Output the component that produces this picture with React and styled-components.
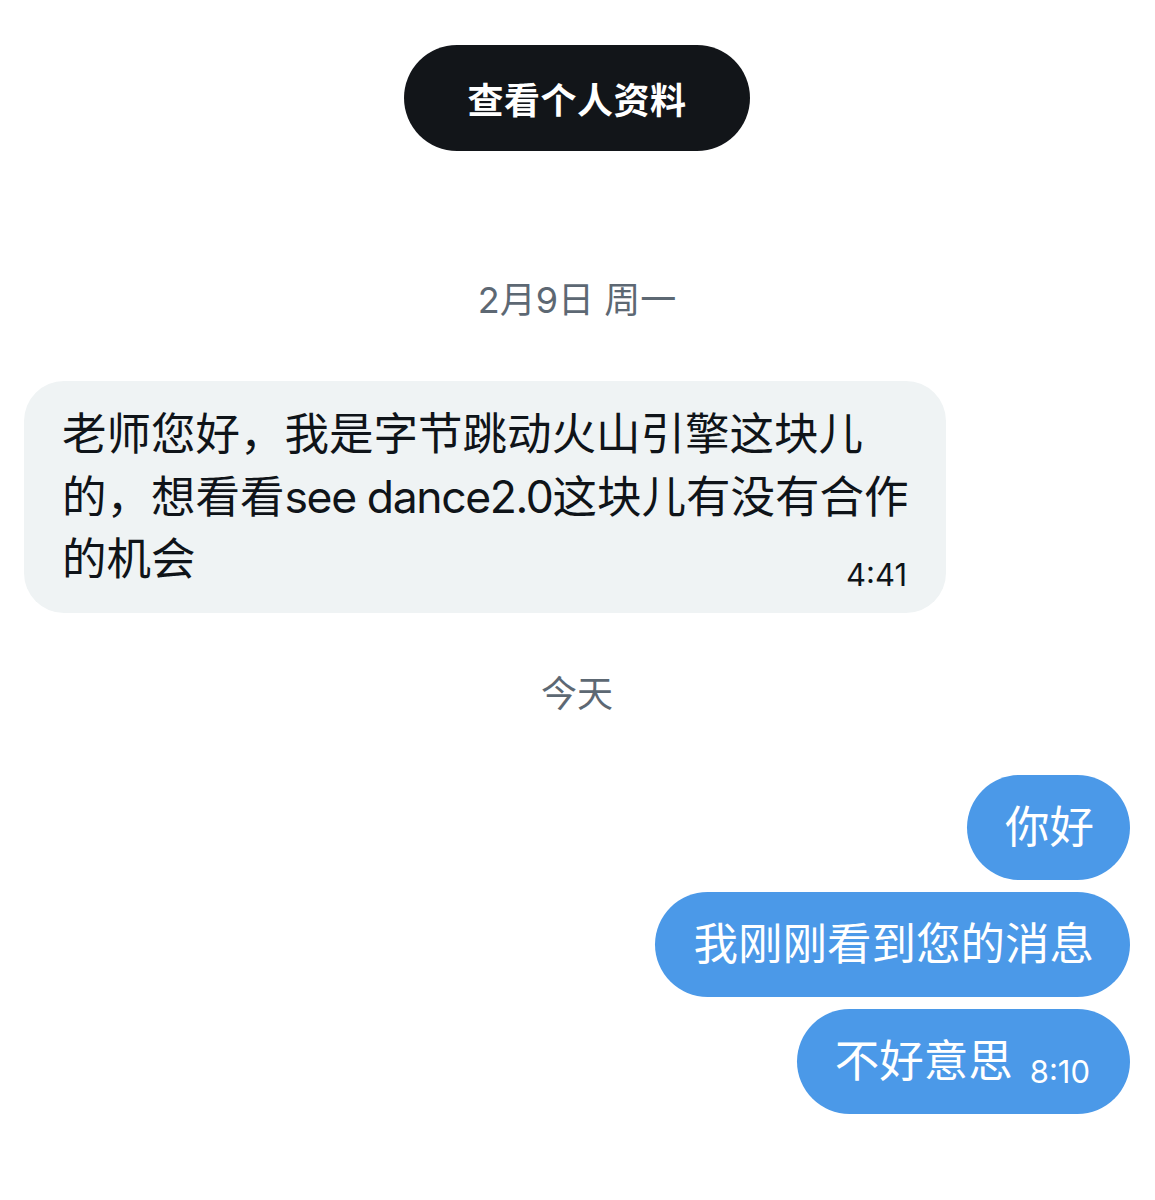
import React from "react";
import styled, { createGlobalStyle } from "styled-components";

const GlobalStyle = createGlobalStyle`
  html, body {
    margin: 0;
    padding: 0;
    background: #ffffff;
  }
  body {
    font-family: Inter, "Noto Sans CJK SC", "Noto Sans", sans-serif;
    -webkit-font-smoothing: antialiased;
  }
`;

const Page = styled.div`
  display: flex;
  flex-direction: column;
  padding: 45px 25px 40px 24px;
  min-height: 1115px;
  box-sizing: border-box;
`;

const ProfileButton = styled.button`
  align-self: center;
  height: 106px;
  padding: 0 63px;
  border: none;
  border-radius: 53px;
  background: #121519;
  color: #ffffff;
  font-family: Inter, "Noto Sans CJK SC", sans-serif;
  font-size: 36px;
  font-weight: 700;
  letter-spacing: 0.5px;
  cursor: pointer;
`;

const DayLabel = styled.div`
  align-self: center;
  margin-top: ${(p) => p.$top}px;
  font-size: 36px;
  line-height: 40px;
  color: #5d6873;
`;

const IncomingBubble = styled.div`
  align-self: flex-start;
  display: flex;
  flex-direction: column;
  width: 922px;
  box-sizing: border-box;
  margin-top: 61px;
  padding: 22px 30px 20px 38px;
  border-radius: 40px;
  background: #eff3f4;
  color: #0f1419;
`;

const MessageText = styled.div`
  font-size: 44.5px;
  line-height: 62.5px;
  word-break: normal;
  line-break: strict;
`;

const LatinRun = styled.span`
  letter-spacing: -1.4px;
`;

const BubbleTime = styled.div`
  align-self: flex-end;
  margin-top: -34px;
  margin-right: 9px;
  font-size: 31px;
  line-height: 36px;
  color: #0f1419;
`;

const OutgoingGroup = styled.div`
  align-self: flex-end;
  display: flex;
  flex-direction: column;
  align-items: flex-end;
  gap: 12px;
  margin-top: 61px;
`;

const OutgoingBubble = styled.div`
  height: 105px;
  box-sizing: border-box;
  display: flex;
  align-items: center;
  padding: 0 ${(p) => (p.$withTime ? 40 : 36)}px 0 38px;
  border-radius: 53px;
  background: #4b99e8;
  color: #ffffff;
  font-size: 44.5px;
  line-height: 62px;
  white-space: nowrap;
`;

const InlineTime = styled.span`
  margin-left: 17px;
  font-size: 31px;
  position: relative;
  top: 11px;
`;

export default function App() {
  return (
    <>
      <GlobalStyle />
      <Page>
        <ProfileButton>查看个人资料</ProfileButton>
        <DayLabel $top={129}>2月9日 周一</DayLabel>
        <IncomingBubble>
          <MessageText>
            老师您好，我是字节跳动火山引擎这块儿的，想看看<LatinRun>see dance2.0</LatinRun>这块儿有没有合作的机会
          </MessageText>
          <BubbleTime>4:41</BubbleTime>
        </IncomingBubble>
        <DayLabel $top={61}>今天</DayLabel>
        <OutgoingGroup>
          <OutgoingBubble>你好</OutgoingBubble>
          <OutgoingBubble>我刚刚看到您的消息</OutgoingBubble>
          <OutgoingBubble $withTime>
            不好意思
            <InlineTime>8:10</InlineTime>
          </OutgoingBubble>
        </OutgoingGroup>
      </Page>
    </>
  );
}
